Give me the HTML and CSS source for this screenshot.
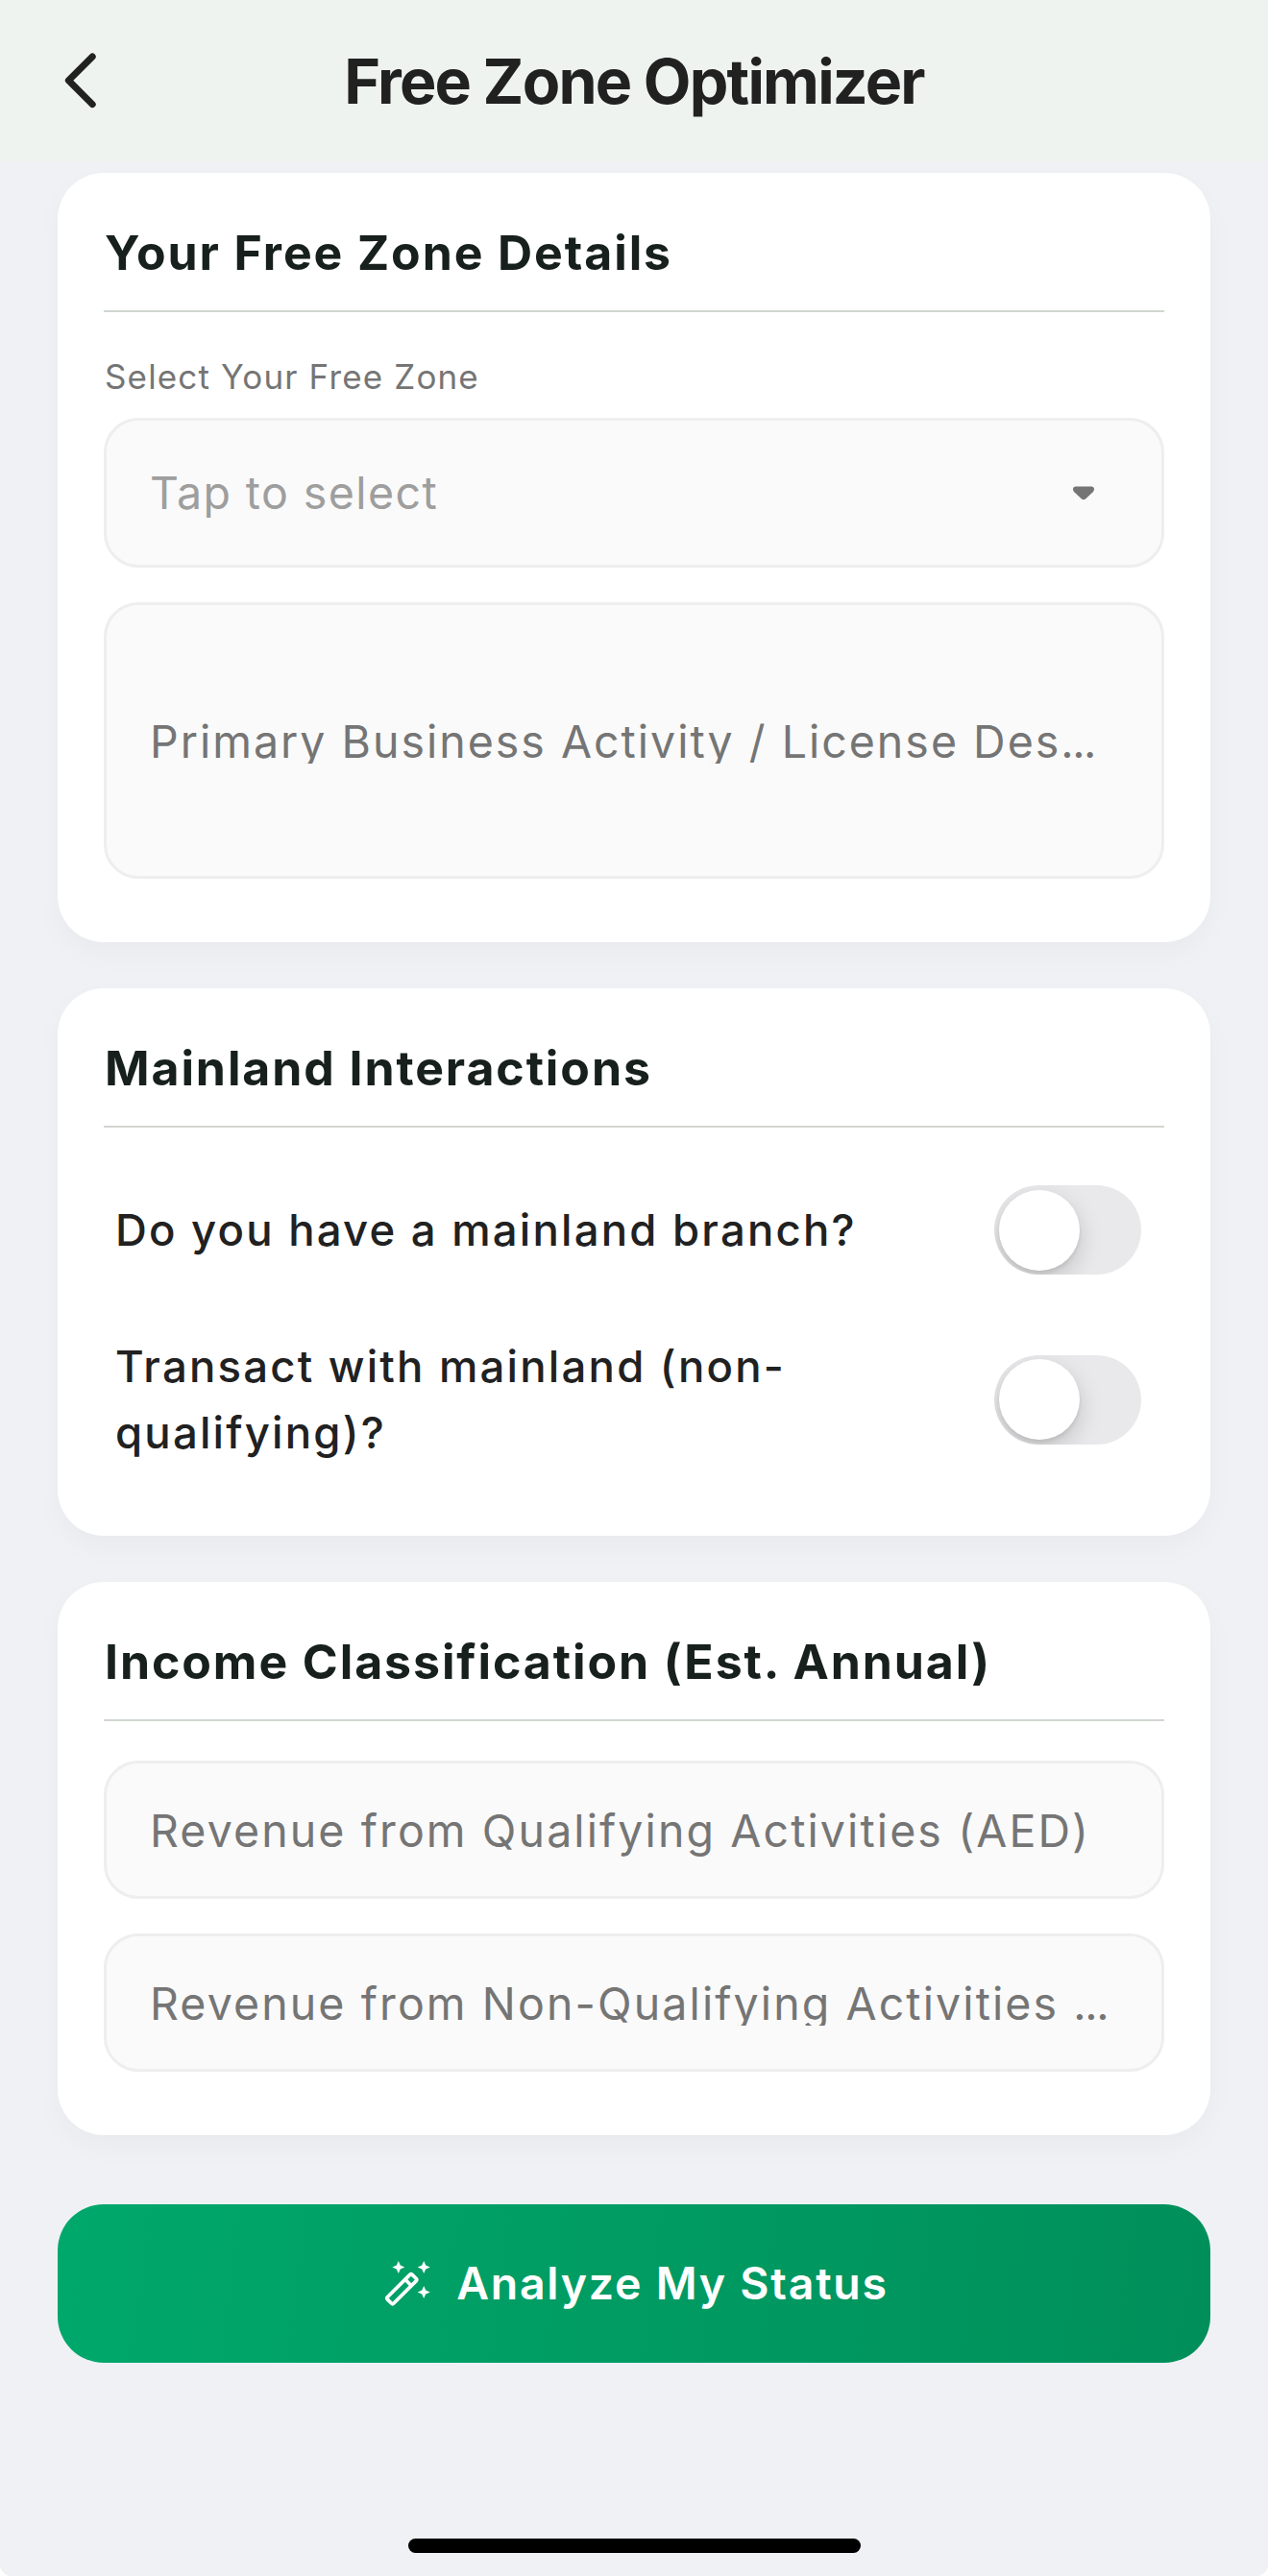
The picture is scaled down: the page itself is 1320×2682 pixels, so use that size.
FILE: index.html
```html
<!DOCTYPE html>
<html lang="en">
<head>
<meta charset="utf-8">
<title>Free Zone Optimizer</title>
<link rel="stylesheet" href="styles.css">
</head>
<body>
<div class="screen">
  <header class="app-bar">
    <svg class="back" viewBox="0 0 44 66" aria-label="Back"><path d="M35.2 8 L10.4 32.8 L35.2 57.6" /></svg>
    <h1 class="title">Free Zone Optimizer</h1>
  </header>
  <main class="content">
    <section class="card card-zone">
      <h2 class="heading">Your Free Zone Details</h2>
      <div class="label">Select Your Free Zone</div>
      <div class="field select"><span class="placeholder hint">Tap to select</span>
        <svg class="caret" viewBox="0 0 22 15"><path d="M3 0.5H19Q22 0.5 22 3.5Q22 5 20.5 6.5L13 13.5Q11 15 9 13.5L1.5 6.5Q0 5 0 3.5Q0 0.5 3 0.5Z"/></svg>
      </div>
      <div class="field area"><span class="placeholder clipped">Primary Business Activity / License Des<span class="dots">...</span></span></div>
    </section>
    <section class="card card-mainland">
      <h2 class="heading heading-main">Mainland Interactions</h2>
      <div class="row row-first"><span class="question">Do you have a mainland branch?</span><span class="toggle"><span class="knob"></span></span></div>
      <div class="row"><span class="question">Transact with mainland (non-<br>qualifying)?</span><span class="toggle"><span class="knob"></span></span></div>
    </section>
    <section class="card card-income">
      <h2 class="heading">Income Classification (Est. Annual)</h2>
      <div class="field input input-first"><span class="placeholder">Revenue from Qualifying Activities (AED)</span></div>
      <div class="field input"><span class="placeholder clipped">Revenue from Non-Qualifying Activities <span class="dots">...</span></span></div>
    </section>
    <button class="analyze">
      <svg class="wand" viewBox="0 0 48 48">
        <g class="wand-stick" transform="translate(18.3 29.2) rotate(-45)"><rect x="-18.2" y="-4.6" width="36.4" height="9.2" rx="1.8"/><path d="M9.5 -4.6V4.6"/></g>
        <path d="M14.8 0L16.8 4.5L21.3 6.5L16.8 8.5L14.8 13L12.8 8.5L8.3 6.5L12.8 4.5ZM41.2 0L43.2 4.5L47.7 6.5L43.2 8.5L41.2 13L39.2 8.5L34.7 6.5L39.2 4.5ZM41.2 26L43.2 30.5L47.7 32.5L43.2 34.5L41.2 39L39.2 34.5L34.7 32.5L39.2 30.5Z"/>
      </svg>
      <span class="analyze-text">Analyze My Status</span>
    </button>
  </main>
  <div class="home-bar"></div>
</div>
</body>
</html>
```
FILE: styles.css
```css
* { box-sizing: border-box; }
html { background: #fff; }
body { margin: 0; font-family: Inter, "Liberation Sans", sans-serif; }
.screen { width: 1320px; height: 2682px; background: #eff1f5; border-radius: 0 0 12px 12px; display: flex; flex-direction: column; align-items: center; overflow: hidden; }
.app-bar { width: 100%; height: 168px; flex: none; background: #eef3ef; display: grid; grid-template-columns: 120px 1fr 120px; align-items: center; }
.back { width: 44px; height: 66px; margin-left: 61px; fill: none; stroke: #212121; stroke-width: 7; stroke-linecap: round; stroke-linejoin: round; }
.title { margin: 0; padding-top: 1px; text-align: center; font-size: 64.5px; font-weight: 650; letter-spacing: -1.8px; color: #212121; white-space: nowrap; }
.content { width: 1200px; margin-top: 12px; display: flex; flex-direction: column; }
.card { background: #fff; border-radius: 48px; padding: 48px; margin-bottom: 48px; box-shadow: 0 12px 30px rgba(0,0,0,.03); display: flex; flex-direction: column; }
.card-zone { height: 801px; }
.card-mainland { height: 570px; }
.card-income { height: 576px; }
.heading { margin: 0; height: 97px; flex: none; border-bottom: 2px solid #d0d7d0; font-size: 50px; line-height: 71px; font-weight: 650; letter-spacing: 1.9px; color: #17201c; white-space: nowrap; padding-left: 1px; }
.heading-main { border-bottom-color: #d4d6d1; }
.label { margin-top: 40px; height: 54px; line-height: 54px; font-size: 35px; letter-spacing: 1.15px; color: #757575; padding-left: 1px; }
.field { background: #fafafa; border: 3px solid #eee; border-radius: 36px; display: flex; align-items: center; padding-left: 45px; flex: none; }
.select { height: 156px; margin-top: 16px; justify-content: space-between; padding-right: 70px; }
.caret { width: 22px; height: 15px; fill: #757575; }
.area { height: 288px; margin-top: 36px; }
.input { height: 144px; margin-top: 36px; }
.input-first { margin-top: 41px; }
.placeholder { padding-top: 2px; font-size: 46.5px; line-height: 60px; letter-spacing: 2px; color: #757575; white-space: nowrap; }
.input .placeholder { letter-spacing: 2.1px; }
.hint { padding-top: 0; color: #9e9e9e; letter-spacing: 1.4px; }
.clipped { clip-path: inset(0 0 7px 0); }
.dots { letter-spacing: -1.5px; }
.row { display: flex; justify-content: space-between; align-items: center; padding: 0 24px 0 12px; margin-top: 61px; }
.row-first { margin-top: 60px; }
.question { font-size: 45.5px; line-height: 69px; letter-spacing: 2.2px; font-weight: 450; color: #212121; white-space: nowrap; }
.toggle { width: 153px; height: 93px; border-radius: 47px; background: #e9e9eb; overflow: hidden; padding: 4.5px; flex: none; }
.knob { display: block; width: 84px; height: 84px; border-radius: 50%; background: #fff; box-shadow: 0 9px 24px rgba(0,0,0,.17), 0 3px 4px rgba(0,0,0,.08); }
.analyze { margin-top: 24px; height: 165px; border: 0; border-radius: 48px; background: linear-gradient(97deg, #00a86b, #008f5a); color: #fff; font: 600 46.5px Inter, sans-serif; letter-spacing: 1.75px; display: flex; align-items: center; justify-content: center; gap: 27px; padding: 0 0 0 5px; }
.analyze-text { padding-bottom: 2px; }
.wand { width: 48px; height: 48px; fill: #fff; }
.wand-stick { fill: none; stroke: #fff; stroke-width: 3.7; }
.home-bar { width: 471px; height: 15px; border-radius: 8px; background: #000; margin-top: auto; margin-bottom: 24px; }
```
